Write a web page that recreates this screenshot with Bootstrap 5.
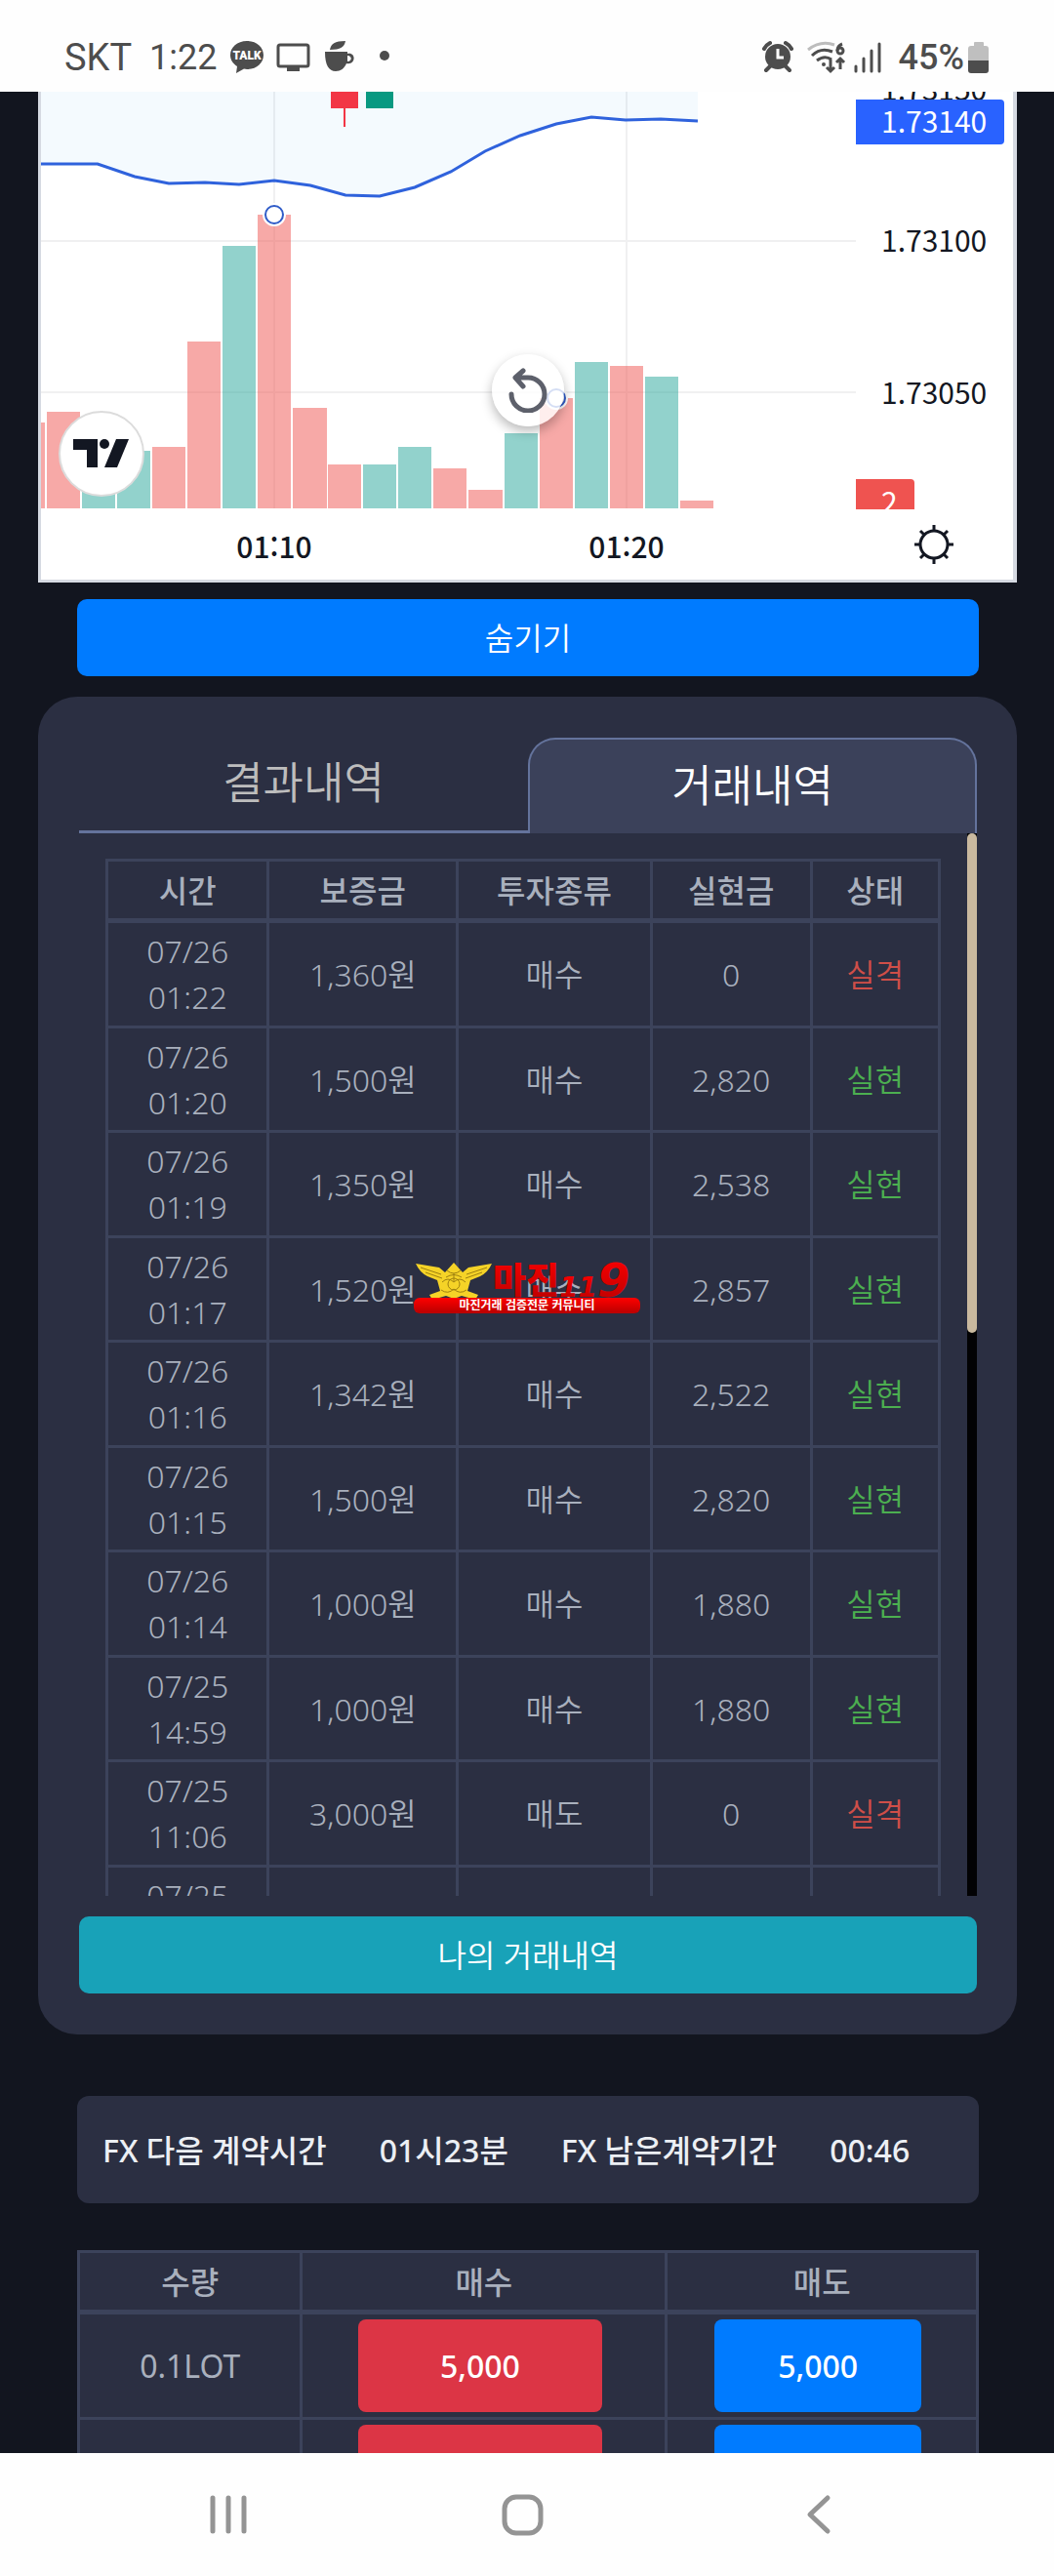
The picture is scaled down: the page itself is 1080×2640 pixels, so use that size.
<!DOCTYPE html>
<html lang="ko">
<head>
<meta charset="utf-8">
<meta name="viewport" content="width=device-width, initial-scale=1">
<title>FX 거래내역</title>
<link href="https://cdn.jsdelivr.net/npm/bootstrap@5.3.0/dist/css/bootstrap.min.css" rel="stylesheet">
<style>
  :root { --panel: #2b2f42; --line: #3c435b; --ink: #a9b0bd; --status: #4d4d4d; }
  body { background: #12151f; color: var(--ink); font-family: "Noto Sans", "Noto Sans CJK KR", sans-serif; font-size: 32px; line-height: 47px; font-weight: 350; }
  .status-bar { height: 94px; background: #fefefe; color: var(--status); padding: 24px 66px 0; font-family: Roboto, sans-serif; line-height: 72px; }
  .status-bar svg, .chart-frame svg, .nav-keys svg { display: block; }
  .carrier { font-size: 38px; font-weight: 400; }
  .clock { font-size: 36px; font-weight: 400; margin: 0 12px 0 18px; }
  .charge { font-size: 36px; font-weight: 500; margin: 0 4px 0 16px; }
  .page-wrap { padding: 0 38px 0 39px; }
  .inset-row { margin: 0 39px 0 40px; }
  .chart-frame { background: #fff; border: solid #d6dae2; border-width: 0 4px 3px 3px; font-family: "Noto Sans CJK KR", sans-serif; font-weight: 400; }
  .tv-badge { left: 18px; bottom: 85px; width: 88px; height: 88px; background: #fff; border: 2px solid #dcdcdc; }
  .reload-btn { left: 50%; bottom: 157px; width: 74px; height: 74px; margin-left: -36px; background: rgba(255,255,255,.8); border: 0; padding: 0; box-shadow: 0 5px 12px rgba(0,0,0,.28); }
  .gear-btn { right: 59px; bottom: 14px; width: 44px; height: 44px; background: none; border: 0; padding: 0; }
  .btn-tall { height: 79px; font-size: 32px; font-weight: 350; color: #fff; border: 0; border-radius: 10px; padding: 0; }
  .hide-row { padding-top: 17px; }
  .btn-blue { background: #007bff; color: #fff; }
  .btn-teal { background: #18a2b8; color: #fff; margin-top: 21px; }
  .btn-red { background: #dc3545; color: #fff; }
  .panel-card { background: var(--panel); border-radius: 40px; padding: 42px 41px 42px 42px; margin-top: 21px; }
  .tab-strip { border: 0; }
  .tab-strip .nav-link { height: 98px; border: 0; border-bottom: 3px solid #64739c; border-radius: 0; color: #bdbdbd; font-size: 45px; padding: 0 0 4px; margin: 0; }
  .tab-strip .nav-link.active { background: #3b415a; color: #fff; border: 2px solid #64739c; border-bottom: 0; border-radius: 28px 28px 0 0; }
  .scroll-area { height: 1089px; }
  .scroll-pane { padding: 26px 27px 0; }
  .scroll-track { width: 10px; background: #020204; }
  .scroll-thumb { height: 47%; background: #c9b99f; border-radius: 5px; }
  .grid-table { border-collapse: separate; border-spacing: 0; border: solid var(--line); border-width: 3px 0 0 3px; table-layout: fixed; text-align: center; vertical-align: middle; width: 100%; }
  .grid-table th, .grid-table td { border: solid var(--line); border-width: 0 3px 3px 0; padding: 5px 0 6px; }
  .grid-table th { font-weight: 500; font-family: "Noto Sans CJK KR", sans-serif; height: 63px; border-bottom-width: 5px; padding: 0 0 2px; }
  .trade-table tbody tr:nth-child(even) td { padding-bottom: 5px; }
  .trade-table .lost { color: #cf4e48; }
  .trade-table .won { color: #4caf50; }
  .timer-box { background: var(--panel); border-radius: 12px; color: #eceff4; height: 110px; padding: 0 26px; gap: 54px; margin-top: 63px; font-weight: 500; }
  .lot-table { background: var(--panel); }
  .lot-table td { height: 108px; padding: 5px 0; font-weight: 400; }
  .lot-table td + td { padding-right: 8px; }
  .lot-btn { height: 95px; width: 69%; border: 0; border-radius: 8px; font-size: 32px; font-weight: 500; padding: 0; }
  .nav-keys { height: 126px; background: #fefefe; padding: 0 224px 0 213px; }
  .nav-keys button { background: none; border: 0; padding: 0; }
  .site-mark { left: 424px; top: 1292px; width: 234px; font-family: "Noto Sans CJK KR", sans-serif; pointer-events: none; }
</style>
<script src="https://cdn.jsdelivr.net/npm/bootstrap@5.3.0/dist/js/bootstrap.bundle.min.js"></script>
</head>
<body class="d-flex flex-column vh-100 overflow-hidden position-relative">

<header class="status-bar d-flex align-items-center justify-content-between flex-shrink-0">
  <div class="d-flex align-items-center">
    <span class="carrier">SKT</span>
    <span class="clock">1:22</span>
    <svg width="190" height="36" viewBox="0 0 190 36" fill="#4d4d4d">
      <path d="M18 1C8 1 1 7.500 1 15.500c0 5 3 9 7 11.500l-1 7 8-4.500 3 .500c10 0 17-6.500 17-14.500S28 1 18 1z"/>
      <text x="18" y="20" font-size="12" font-weight="900" fill="#fff" text-anchor="middle" font-family="Roboto">TALK</text>
      <rect x="50" y="5" width="31" height="22" rx="2" fill="none" stroke="#4d4d4d" stroke-width="3"/><path d="M59 28h13v4H59z"/>
      <path d="M98 12h23v2c9-2 9 12-1 10-2 5-6 8-11 8-7 0-11-6-11-20zm23 4v6c5 0 5-6 0-6z" fill-rule="evenodd"/>
      <path d="M103 10c1-6 5-9 16-9-1 6-5 9-16 9z"/>
      <circle cx="159" cy="16" r="5"/>
    </svg>
  </div>
  <div class="d-flex align-items-center">
    <svg width="124" height="36" viewBox="0 0 124 36" fill="none" stroke="#4d4d4d" stroke-width="4">
      <circle cx="16" cy="17" r="13" fill="#4d4d4d" stroke="none"/>
      <path d="M2 9q2-4 6-6M30 9q-2-4-6-6M8 27l-4 4M24 27l4 4" stroke-linecap="round"/>
      <path d="M16 9v9h6" stroke="#fff" stroke-width="3"/>
      <path d="M47 10q13-10 27-5" stroke="#bdbdbd" stroke-width="3"/>
      <path d="M51 16q9-9 21-4M56 21q8-6 15-1" stroke-width="3"/>
      <circle cx="63" cy="25" r="2" fill="#4d4d4d" stroke="none"/>
      <path d="M82 4q-5 2-5 7M70 20v12m-4-4l4 4 4-4M80 30V19m-4 4l4-4 4 4" stroke-width="3"/><circle cx="80" cy="11" r="3" stroke-width="3"/>
      <path d="M96 27v5M104 19v13M112 11v21M120 4v28" stroke-width="3" stroke-linecap="round"/>
    </svg>
    <span class="charge">45%</span>
    <svg width="22" height="34" viewBox="0 0 22 34"><path d="M6 2q0-1 1-1h8q1 0 1 1v3h2q3 0 3 3v12H0V8q0-3 3-3h3z" fill="#bfbfbf"/><path d="M0 20h21v10q0 3-3 3H3q-3 0-3-3z" fill="#4d4d4d"/></svg>
  </div>
</header>

<main class="page-wrap flex-fill overflow-hidden">
  <section class="chart-frame position-relative" aria-label="차트">
    <svg width="100%" viewBox="42 94 996 500">
      <path d="M42 168L100 168 138 181 173 188 210 187 245 189 281 185 318 190 354 200 389 201 425 192 462 176 497 155 533 139 570 127 606 120 641 123 677 122 715 124V94H42z" fill="#f4fafe"/>
      <path d="M281 94v427M642 94v427M42 247h835M42 402h835" stroke="#2a2e39" stroke-opacity=".07" stroke-width="2"/>
      <path d="M42 168L100 168 138 181 173 188 210 187 245 189 281 185 318 190 354 200 389 201 425 192 462 176 497 155 533 139 570 127 606 120 641 123 677 122 715 124" fill="none" stroke="#2f62dc" stroke-width="3"/>
      <path d="M339 94h28v17h-13v19h-2v-19h-13z" fill="#f23645"/><path d="M375 94h28v17h-28z" fill="#089981"/>
      <g fill="#ef5350" fill-opacity=".5">
        <path d="M42 433h4v88h-4zM48 422h34v99H48zM156 458h34v63h-34zM192 350h34v171h-34zM264 220h34v301h-34zM300 418h35v103h-35zM336 476h34v45h-34zM444 480h34v41h-34zM480 502h35v19h-35zM553 408h34v113h-34zM625 375h34v146h-34zM697 513h34v8h-34z"/>
      </g>
      <g fill="#26a69a" fill-opacity=".5">
        <path d="M84 462h34v59H84zM120 462h34v59h-34zM228 252h34v269h-34zM372 476h34v45h-34zM408 458h34v63h-34zM517 444h34v77h-34zM589 371h34v150h-34zM661 386h34v135h-34z"/>
      </g>
      <g fill="#fff"><circle cx="281" cy="220" r="12"/><circle cx="281" cy="220" r="9" stroke="#2f5cc8" stroke-width="2"/><circle cx="570" cy="408" r="12"/><circle cx="570" cy="408" r="9" stroke="#2f5cc8" stroke-width="2"/></g>
      <g font-size="30" fill="#131722">
        <text x="903" y="103">1.73150</text>
        <path d="M877 102h148q4 0 4 4v38q0 4-4 4H877z" fill="#2962ff"/>
        <text x="903" y="136" fill="#fff">1.73140</text>
        <text x="903" y="258">1.73100</text>
        <text x="903" y="414">1.73050</text>
        <path d="M877 491h56q4 0 4 4v27h-60z" fill="#ef5350"/>
        <text x="903" y="526" fill="#fff">2</text>
        <path d="M877 522h60v12h-60z" fill="#fff"/>
        <text x="281" y="572" font-weight="500" text-anchor="middle">01:10</text>
        <text x="642" y="572" font-weight="500" text-anchor="middle">01:20</text>
      </g>
    </svg>
    <a href="#" class="tv-badge position-absolute rounded-circle d-flex align-items-center justify-content-center" aria-label="TradingView">
      <svg width="58" height="30" viewBox="0 0 58 30" fill="#131722"><path d="M0 0h25v29H14V11H0zM44 0h13L45 29H32z"/><circle cx="32" cy="5" r="5"/></svg>
    </a>
    <button type="button" class="reload-btn position-absolute rounded-circle d-flex align-items-center justify-content-center" aria-label="새로고침">
      <svg width="40" height="46" viewBox="0 0 40 46" fill="none" stroke="#5d606b" stroke-width="5" stroke-linecap="round" stroke-linejoin="round"><path d="M3 27a17 17 0 1 0 17-17H8M15 3l-8 7 8 9"/></svg>
    </button>
    <button type="button" class="gear-btn position-absolute" aria-label="설정">
      <svg width="44" height="44" viewBox="0 0 44 44" fill="none" stroke="#131722" stroke-width="3"><circle cx="22" cy="22" r="14"/><path d="M22 8V2M22 36v6M8 22H2M36 22h6M12 12L8 8M32 12l4-4M12 32l-4 4M32 32l4 4"/></svg>
    </button>
  </section>

  <div class="inset-row hide-row"><button type="button" class="btn btn-tall btn-blue w-100">숨기기</button></div>

  <section class="panel-card">
    <ul class="nav nav-tabs nav-justified tab-strip">
      <li class="nav-item"><button type="button" class="nav-link">결과내역</button></li>
      <li class="nav-item"><button type="button" class="nav-link active">거래내역</button></li>
    </ul>
    <div class="scroll-area d-flex overflow-hidden">
      <div class="flex-fill scroll-pane">
        <table class="grid-table trade-table">
          <colgroup><col style="width:19.4%"><col style="width:22.7%"><col style="width:23.3%"><col style="width:19.2%"><col style="width:15.4%"></colgroup>
          <thead><tr><th scope="col">시간</th><th scope="col">보증금</th><th scope="col">투자종류</th><th scope="col">실현금</th><th scope="col">상태</th></tr></thead>
          <tbody>
            <tr><td>07/26<br>01:22</td><td>1,360원</td><td>매수</td><td>0</td><td class="lost">실격</td></tr>
            <tr><td>07/26<br>01:20</td><td>1,500원</td><td>매수</td><td>2,820</td><td class="won">실현</td></tr>
            <tr><td>07/26<br>01:19</td><td>1,350원</td><td>매수</td><td>2,538</td><td class="won">실현</td></tr>
            <tr><td>07/26<br>01:17</td><td>1,520원</td><td>매수</td><td>2,857</td><td class="won">실현</td></tr>
            <tr><td>07/26<br>01:16</td><td>1,342원</td><td>매수</td><td>2,522</td><td class="won">실현</td></tr>
            <tr><td>07/26<br>01:15</td><td>1,500원</td><td>매수</td><td>2,820</td><td class="won">실현</td></tr>
            <tr><td>07/26<br>01:14</td><td>1,000원</td><td>매수</td><td>1,880</td><td class="won">실현</td></tr>
            <tr><td>07/25<br>14:59</td><td>1,000원</td><td>매수</td><td>1,880</td><td class="won">실현</td></tr>
            <tr><td>07/25<br>11:06</td><td>3,000원</td><td>매도</td><td>0</td><td class="lost">실격</td></tr>
            <tr><td>07/25<br>&nbsp;</td><td></td><td></td><td></td><td></td></tr>
          </tbody>
        </table>
      </div>
      <div class="scroll-track flex-shrink-0"><div class="scroll-thumb"></div></div>
    </div>
    <button type="button" class="btn btn-tall btn-teal w-100">나의 거래내역</button>
  </section>

  <section class="inset-row timer-box d-flex align-items-center text-nowrap">
    <span>FX 다음 계약시간</span><span>01시23분</span><span>FX 남은계약기간</span><span>00:46</span>
  </section>

  <div class="inset-row mt-5">
    <table class="grid-table lot-table">
      <colgroup><col style="width:24.8%"><col style="width:40.6%"><col style="width:34.6%"></colgroup>
      <thead><tr><th scope="col">수량</th><th scope="col">매수</th><th scope="col">매도</th></tr></thead>
      <tbody>
        <tr><td>0.1LOT</td><td><button type="button" class="btn lot-btn btn-red">5,000</button></td><td><button type="button" class="btn lot-btn btn-blue">5,000</button></td></tr>
        <tr><td></td><td><button type="button" class="btn lot-btn btn-red" aria-label="매수"></button></td><td><button type="button" class="btn lot-btn btn-blue" aria-label="매도"></button></td></tr>
      </tbody>
    </table>
  </div>
</main>

<footer class="nav-keys d-flex align-items-center justify-content-between flex-shrink-0">
  <button type="button" aria-label="최근 앱"><svg width="42" height="42" viewBox="0 0 42 42" stroke="#949494" stroke-width="5" stroke-linecap="round"><path d="M5 4v34M21 4v34M37 4v34"/></svg></button>
  <button type="button" aria-label="홈"><svg width="44" height="44" viewBox="0 0 44 44" fill="none" stroke="#949494" stroke-width="5"><rect x="4" y="4" width="37" height="37" rx="12"/></svg></button>
  <button type="button" aria-label="뒤로"><svg width="42" height="42" viewBox="0 0 42 42" fill="none" stroke="#949494" stroke-width="5" stroke-linecap="round" stroke-linejoin="round"><path d="M34 4L16 21l18 17"/></svg></button>
</footer>

<div class="site-mark position-absolute">
  <svg width="100%" viewBox="0 0 234 56">
    <defs>
      <linearGradient id="redFade" x1="0" y1="0" x2="0" y2="1"><stop offset="0" stop-color="#ff0000"/><stop offset="1" stop-color="#b80000"/></linearGradient>
    </defs>
    <g fill="#f5d327">
      <path d="M2 3l24 4 6 5 9-10 9 10 6-5 24-4q-4 9-12 13l-10 4-3 11 11 4-3 5-14-4-8 3-8-3-14 4-3-5 11-4-3-11-10-4Q6 12 2 3z"/>
      <path d="M7 7l21 7M12 12l17 6M75 7l-21 7M70 12l-17 6M34 10q7 6 14 0M29 22q6-6 12 0 6-6 12 0M28 30q7 5 13-1 6 6 13 1M41 13v8M33 17q8-5 16 0M35 24a6 6 0 0 0 12 0 6 6 0 0 0-12 0" fill="none" stroke="#9d8010" stroke-width="1"/>
    </g>
    <text x="81" y="34" font-size="37" font-weight="900" fill="url(#redFade)">마진</text>
    <text x="149" y="37" font-size="28" font-weight="700" font-style="italic" font-family="DejaVu Sans" fill="url(#redFade)">11</text>
    <text x="188" y="37" font-size="48" font-weight="700" font-style="italic" font-family="DejaVu Sans" fill="url(#redFade)">9</text>
    <rect x="0" y="38" width="232" height="16" rx="6" fill="url(#redFade)"/>
    <text x="116" y="50" font-size="12" font-weight="700" text-anchor="middle" fill="#fff">마진거래 검증전문 커뮤니티</text>
  </svg>
</div>
</body>
</html>
